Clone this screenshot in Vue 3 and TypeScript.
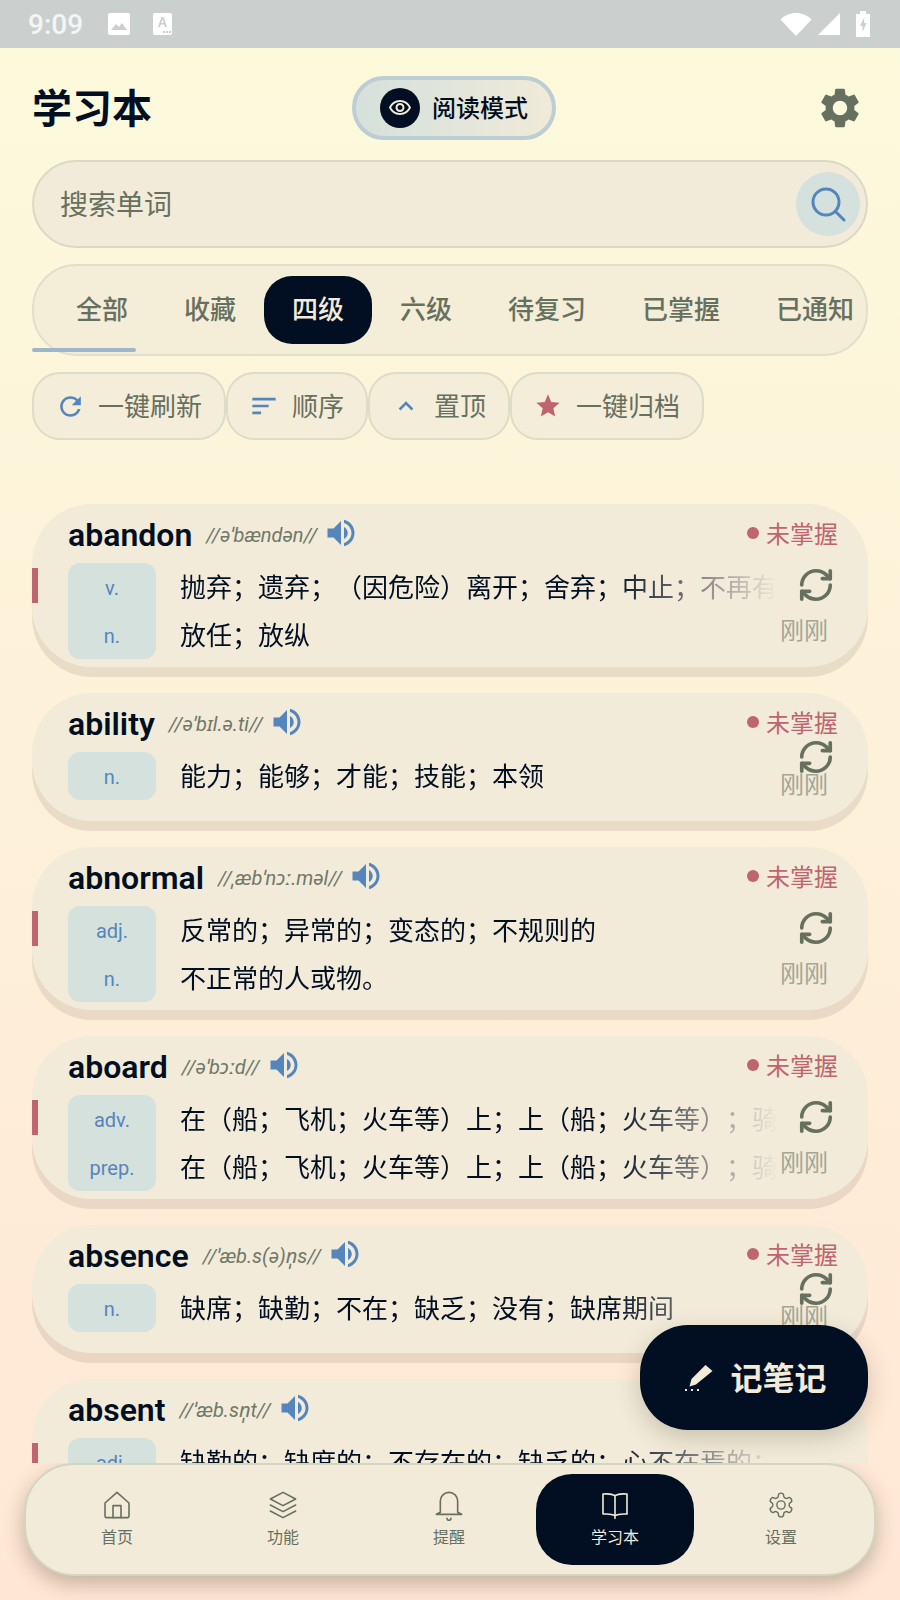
<script setup lang="ts">
interface Word {
  word: string
  phonetic: string
  defs: { pos: string; text: string }[]
}

const tabs = ['全部', '收藏', '四级', '六级', '待复习', '已掌握', '已通知']
const activeTab = '四级'

const words: Word[] = [
  {
    word: 'abandon',
    phonetic: '//əˈbændən//',
    defs: [
      { pos: 'v.', text: '抛弃；遗弃；（因危险）离开；舍弃；中止；不再有' },
      { pos: 'n.', text: '放任；放纵' },
    ],
  },
  {
    word: 'ability',
    phonetic: '//əˈbɪl.ə.ti//',
    defs: [{ pos: 'n.', text: '能力；能够；才能；技能；本领' }],
  },
  {
    word: 'abnormal',
    phonetic: '//ˌæbˈnɔː.məl//',
    defs: [
      { pos: 'adj.', text: '反常的；异常的；变态的；不规则的' },
      { pos: 'n.', text: '不正常的人或物。' },
    ],
  },
  {
    word: 'aboard',
    phonetic: '//əˈbɔːd//',
    defs: [
      { pos: 'adv.', text: '在（船；飞机；火车等）上；上（船；火车等）；骑' },
      { pos: 'prep.', text: '在（船；飞机；火车等）上；上（船；火车等）；骑' },
    ],
  },
  {
    word: 'absence',
    phonetic: '//ˈæb.s(ə)n̩s//',
    defs: [{ pos: 'n.', text: '缺席；缺勤；不在；缺乏；没有；缺席期间' }],
  },
  {
    word: 'absent',
    phonetic: '//ˈæb.sn̩t//',
    defs: [
      { pos: 'adj.', text: '缺勤的；缺席的；不存在的；缺乏的；心不在焉的；' },
      { pos: 'v.', text: '缺席；不参加' },
    ],
  },
]

const navItems = [
  { label: '首页', icon: 'home', box: '0 0 24 24' },
  { label: '功能', icon: 'layers', box: '0 0 24 24' },
  { label: '提醒', icon: 'bell', box: '0 0 24 24' },
  { label: '学习本', icon: 'book', box: '0 0 24 24' },
  { label: '设置', icon: 'gear', box: '-1.5 -1.5 27 27' },
]
</script>

<template>
  <div class="page">
    <div class="status">
      <span class="time">9:09</span>
      <svg class="st-img" viewBox="0 0 22 22">
        <rect width="22" height="22" rx="2" fill="#fff" />
        <path d="M3 17l5-6 3 3 3-4 5 7z" fill="#cbcfce" />
      </svg>
      <svg class="st-a" viewBox="0 0 19 22">
        <rect width="19" height="22" rx="2" fill="#fff" />
        <path d="M5 14 8.500 4h2L14 14h-2l-.8-2.400H7.800L7 14zM8.300 10h2.400L9.500 6.200z" fill="#cbcfce" />
        <path d="M10 18h2v2h-2zM13 18h2v2h-2zM16 18h2v2h-2z" fill="#cbcfce" />
      </svg>
      <span class="st-space"></span>
      <svg class="st-wifi" viewBox="0 0 32 24">
        <path d="M0.500 7.500C4.500 3.500 10 1 16 1s11.500 2.500 15.500 6.500L17 23a1.400 1.400 0 0 1-2 0z" fill="#fff" />
      </svg>
      <svg class="st-signal" viewBox="0 0 22 22">
        <path d="M0 22 22 0v22z" fill="#fff" />
      </svg>
      <svg class="st-batt" viewBox="0 0 14 26">
        <path d="M4 0h6v3h4v23H0V3h4z" fill="#fff" />
        <path d="M8.500 6 4 15h2.500v6L10.500 12H8z" fill="#cbcfce" />
      </svg>
    </div>

    <header class="head">
      <h1 class="title">学习本</h1>
      <div class="read-pill">
        <span class="eye">
          <svg viewBox="0 0 24 24" width="24" height="24">
            <path fill="#f2ebd9" d="M12 6c3.790 0 7.170 2.130 8.820 5.500C19.170 14.870 15.790 17 12 17s-7.170-2.130-8.820-5.500C4.830 8.130 8.210 6 12 6m0-2C7 4 2.730 7.110 1 11.500 2.730 15.890 7 19 12 19s9.270-3.110 11-7.500C21.270 7.110 17 4 12 4zm0 5c1.380 0 2.500 1.120 2.500 2.500S13.380 14 12 14s-2.500-1.120-2.500-2.500S10.620 9 12 9m0-2c-2.480 0-4.500 2.020-4.500 4.500S9.520 16 12 16s4.500-2.020 4.500-4.500S14.480 7 12 7z" />
          </svg>
        </span>
        <span class="lift">阅读模式</span>
      </div>
      <svg class="gear" viewBox="0 0 24 24" width="48" height="48">
        <path fill="#67705f" d="M19.140 12.940c.04-.3.06-.61.06-.94 0-.32-.02-.64-.07-.94l2.030-1.580c.18-.14.23-.41.12-.61l-1.920-3.320c-.12-.22-.37-.29-.59-.22l-2.390.96c-.5-.38-1.030-.7-1.620-.94l-.36-2.540c-.04-.24-.24-.41-.48-.41h-3.840c-.24 0-.43.17-.47.41l-.36 2.540c-.59.24-1.130.57-1.620.94l-2.390-.96c-.22-.08-.47 0-.59.22L2.740 8.870c-.12.21-.08.47.12.61l2.030 1.580c-.05.3-.09.63-.09.94s.02.64.07.94l-2.030 1.580c-.18.14-.23.41-.12.61l1.920 3.320c.12.22.37.29.59.22l2.390-.96c.5.38 1.030.7 1.620.94l.36 2.540c.05.24.24.41.48.41h3.840c.24 0 .44-.17.47-.41l.36-2.540c.59-.24 1.130-.56 1.620-.94l2.390.96c.22.08.47 0 .59-.22l1.920-3.320c.12-.22.07-.47-.12-.61l-2.010-1.580zM12 15.600c-1.980 0-3.600-1.620-3.600-3.600s1.620-3.600 3.600-3.600 3.600 1.620 3.600 3.600-1.620 3.600-3.600 3.600z" />
      </svg>
    </header>

    <div class="search">
      <span class="placeholder">搜索单词</span>
      <span class="search-btn">
        <svg viewBox="0 0 36 36" width="36" height="36" fill="none" stroke="#5585bd" stroke-width="3">
          <circle cx="16" cy="16" r="13" />
          <path d="M26 26l8 8" stroke-linecap="round" />
        </svg>
      </span>
    </div>

    <div class="tabs-wrap">
      <div class="tabs">
        <span v-for="t in tabs" :key="t" class="tab" :class="{ active: t === activeTab }">{{ t }}</span>
      </div>
      <span class="indicator"></span>
    </div>

    <div class="actions">
      <div class="action">
        <svg viewBox="0 0 24 24" width="31" height="31" class="refresh">
          <path fill="#5585bd" d="M17.650 6.350C16.200 4.900 14.210 4 12 4c-4.420 0-7.990 3.580-7.990 8s3.570 8 7.990 8c3.730 0 6.840-2.550 7.730-6h-2.080c-.82 2.330-3.040 4-5.650 4-3.310 0-6-2.690-6-6s2.690-6 6-6c1.660 0 3.140.69 4.220 1.780L13 11h7V4l-2.350 2.350z" />
        </svg>
        <span class="lift">一键刷新</span>
      </div>
      <div class="action">
        <svg viewBox="0 0 24 24" width="28" height="28">
          <path fill="#5585bd" d="M2 5h20v2.200H2zM2 10.900h14v2.200H2zM2 16.800h7.500V19H2z" />
        </svg>
        <span class="lift">顺序</span>
      </div>
      <div class="action">
        <svg viewBox="0 0 24 24" width="28" height="28">
          <path fill="none" stroke="#5585bd" stroke-width="2.200" d="M6.500 15 12 9.500 17.500 15" />
        </svg>
        <span class="lift">置顶</span>
      </div>
      <div class="action">
        <svg viewBox="0 0 24 24" width="28" height="28">
          <path fill="#bf6570" d="M12 17.270 18.180 21l-1.640-7.030L22 9.240l-7.190-.61L12 2 9.190 8.630 2 9.240l5.460 4.730L5.820 21z" />
        </svg>
        <span class="lift">一键归档</span>
      </div>
    </div>

    <main class="list">
      <article v-for="w in words" :key="w.word" class="card" :class="{ tall: w.defs.length > 1 }">
        <span v-if="w.defs.length > 1" class="mark"></span>
        <div class="card-head">
          <span class="word">{{ w.word }}</span>
          <span class="phonetic">{{ w.phonetic }}</span>
          <svg class="speaker" viewBox="0 0 24 24" width="36" height="36">
            <path fill="#5585bd" d="M3 9v6h4l5 5V4L7 9H3zm13.500 3c0-1.770-1.020-3.290-2.500-4.030v8.050c1.480-.73 2.500-2.250 2.500-4.020zM14 3.230v2.060c2.890.86 5 3.540 5 6.710s-2.110 5.850-5 6.710v2.060c4.010-.91 7-4.490 7-8.770s-2.990-7.860-7-8.770z" />
          </svg>
          <span class="state" v-if="w.word !== 'absent'"><i class="dot"></i>未掌握</span>
        </div>
        <div class="card-body">
          <div class="pos-col">
            <span v-for="d in w.defs" :key="d.pos" class="pos">{{ d.pos }}</span>
          </div>
          <div class="defs">
            <div v-for="d in w.defs" :key="d.pos" class="def">{{ d.text }}</div>
          </div>
        </div>
        <div class="sync" v-if="w.word !== 'absent'">
          <svg viewBox="0 0 24 24" width="38" height="38" fill="none" stroke="#67705f" stroke-width="2.300" stroke-linecap="round" stroke-linejoin="round">
            <path d="M3 12a9 9 0 0 1 9-9 9.750 9.750 0 0 1 6.740 2.740L21 8" />
            <path d="M21 3v5h-5" />
            <path d="M21 12a9 9 0 0 1-9 9 9.750 9.750 0 0 1-6.740-2.740L3 16" />
            <path d="M8 16H3v5" />
          </svg>
          <span class="ago">刚刚</span>
        </div>
      </article>
    </main>

    <div class="fab">
      <svg viewBox="0 0 36 36" width="36" height="36">
        <path fill="#f2ebd9" d="M24.500 5 31.500 11 15 24.500 8.500 26.500 10.500 19z" />
        <path fill="#f2ebd9" d="M4 29h2v2H4zM10 29h2v2h-2zM16 29h2v2h-2z" />
      </svg>
      <span class="lift">记笔记</span>
    </div>

    <nav class="nav">
      <div v-for="n in navItems" :key="n.label" class="nav-item" :class="{ on: n.label === '学习本' }">
        <svg :viewBox="n.box" width="32" height="32" fill="none" stroke="currentColor" stroke-width="1.200" stroke-linecap="round" stroke-linejoin="round">
          <template v-if="n.icon === 'home'">
            <path d="M3 10.500 12 2.500l9 8V20a1.500 1.500 0 0 1-1.500 1.500h-15A1.500 1.500 0 0 1 3 20z" />
            <path d="M9 21.500v-9h6v9" />
          </template>
          <template v-else-if="n.icon === 'layers'">
            <path d="M12 2.500 2.500 7.500l9.500 5 9.500-5z" />
            <path d="M2.500 12l9.500 5 9.500-5" />
            <path d="M2.500 16.500l9.500 5 9.500-5" />
          </template>
          <template v-else-if="n.icon === 'bell'">
            <path d="M5.500 17.500V9a6.500 6.500 0 0 1 13 0v8.500l3 1.500h-19z" />
            <path d="M10.500 22a1.500 1.500 0 0 0 3 0" />
          </template>
          <template v-else-if="n.icon === 'book'">
            <path d="M12 5c-2-1.300-5-1.600-9-1.200v15c4-.3 7 0 9 1.200 2-1.200 5-1.500 9-1.200v-15c-4-.4-7-.1-9 1.200z" />
            <path d="M12 5v17" />
          </template>
          <template v-else>
            <path d="M12.220 2h-.44a2 2 0 0 0-2 2v.18a2 2 0 0 1-1 1.730l-.43.25a2 2 0 0 1-2 0l-.15-.08a2 2 0 0 0-2.730.73l-.22.38a2 2 0 0 0 .73 2.730l.15.1a2 2 0 0 1 1 1.720v.51a2 2 0 0 1-1 1.740l-.15.09a2 2 0 0 0-.73 2.730l.22.38a2 2 0 0 0 2.730.73l.15-.08a2 2 0 0 1 2 0l.43.25a2 2 0 0 1 1 1.730V20a2 2 0 0 0 2 2h.44a2 2 0 0 0 2-2v-.18a2 2 0 0 1 1-1.730l.43-.25a2 2 0 0 1 2 0l.15.08a2 2 0 0 0 2.730-.73l.22-.39a2 2 0 0 0-.73-2.730l-.15-.08a2 2 0 0 1-1-1.740v-.5a2 2 0 0 1 1-1.740l.15-.09a2 2 0 0 0 .73-2.730l-.22-.38a2 2 0 0 0-2.730-.73l-.15.08a2 2 0 0 1-2 0l-.43-.25a2 2 0 0 1-1-1.730V4a2 2 0 0 0-2-2z" />
            <circle cx="12" cy="12" r="3.500" />
          </template>
        </svg>
        <span>{{ n.label }}</span>
      </div>
    </nav>
  </div>
</template>

<style>
html,
body {
  margin: 0;
  background: #ffe8d6;
}
</style>

<style scoped>
.page {
  position: relative;
  width: 900px;
  height: 1600px;
  display: flex;
  flex-direction: column;
  overflow: hidden;
  background: linear-gradient(180deg, #fcfadc 0%, #ffe7d6 100%);
  font-family: Roboto, "Noto Sans CJK SC", sans-serif;
  color: #020f22;
  text-spacing-trim: space-all;
}
.lift {
  margin-bottom: 4px;
}

.status {
  flex: none;
  height: 48px;
  display: flex;
  align-items: center;
  padding: 0 30px 0 28px;
  background: #cbcfce;
  box-sizing: border-box;
}
.time {
  font-size: 28px;
  font-weight: 500;
  color: #f4f6f5;
  width: 80px;
}
.st-img {
  width: 22px;
  height: 22px;
}
.st-a {
  width: 19px;
  height: 22px;
  margin-left: 23px;
}
.st-space {
  flex: 1;
}
.st-wifi {
  width: 32px;
  height: 24px;
}
.st-signal {
  width: 22px;
  height: 22px;
  margin-left: 6px;
}
.st-batt {
  width: 14px;
  height: 26px;
  margin-left: 16px;
}

.head {
  flex: none;
  margin-top: 28px;
  height: 64px;
  padding: 0 36px 0 32px;
  display: grid;
  grid-template-columns: 1fr auto 1fr;
  align-items: center;
}
.title {
  margin: 4px 0 0;
  font-size: 40px;
  font-weight: 600;
  line-height: 1;
}
.read-pill {
  box-sizing: border-box;
  width: 204px;
  height: 64px;
  margin-left: 12px;
  display: flex;
  align-items: center;
  gap: 12px;
  padding-left: 24px;
  border: 4px solid #bccdd3;
  border-radius: 32px;
  background: linear-gradient(90deg, #d5e1dc, #f0ead9);
  font-size: 24px;
  font-weight: 500;
}
.eye {
  width: 40px;
  height: 40px;
  border-radius: 50%;
  background: #020f22;
  display: flex;
  align-items: center;
  justify-content: center;
}
.gear {
  justify-self: end;
}

.search {
  flex: none;
  box-sizing: border-box;
  height: 88px;
  margin: 20px 32px 0;
  padding: 0 6px 0 26px;
  display: flex;
  align-items: center;
  justify-content: space-between;
  border: 2px solid #d9d9c5;
  border-radius: 44px;
  background: #f2ebd9;
}
.placeholder {
  font-size: 28px;
  color: #67705f;
  margin-bottom: 2px;
}
.search-btn {
  width: 64px;
  height: 64px;
  border-radius: 50%;
  background: #d5e1dc;
  display: flex;
  align-items: center;
  justify-content: center;
}

.tabs-wrap {
  flex: none;
  position: relative;
  margin: 16px 32px 0;
}
.tabs {
  box-sizing: border-box;
  height: 92px;
  padding: 0 0 0 14px;
  display: flex;
  align-items: center;
  overflow: hidden;
  border: 2px solid #dfdfcb;
  border-radius: 44px;
  background: #f4edd8;
}
.tab {
  flex: none;
  height: 68px;
  line-height: 68px;
  padding: 0 28px;
  border-radius: 28px;
  font-size: 26px;
  font-weight: 500;
  color: #67705f;
}
.tab.active {
  background: #020f22;
  color: #f2ebd9;
}
.indicator {
  position: absolute;
  left: 0;
  bottom: 4px;
  width: 104px;
  height: 4px;
  border-radius: 2px;
  background: #9db7c9;
}

.actions {
  flex: none;
  display: flex;
  margin: 16px 32px 0;
}
.action {
  box-sizing: border-box;
  height: 68px;
  display: flex;
  align-items: center;
  gap: 14px;
  padding: 0 22px;
  border: 2px solid #dcdcc8;
  border-radius: 28px;
  background: #f4edd9;
  font-size: 26px;
  color: #67705f;
}
.action .refresh {
  margin: 0 -1.500px;
}

.list {
  flex: 1;
  min-height: 0;
  margin-top: 64px;
  padding: 0 32px;
  display: flex;
  flex-direction: column;
  gap: 26px;
  overflow: hidden;
}
.card {
  flex: none;
  position: relative;
  box-sizing: border-box;
  min-height: 128px;
  padding: 0 30px 8px 36px;
  border-radius: 60px;
  background: #f2ebd9;
  box-shadow: 0 10px 0 rgba(110, 95, 90, 0.14);
}
.mark {
  position: absolute;
  left: 0;
  top: 64px;
  width: 6px;
  height: 35px;
  background: #bf6570;
}
.card-head {
  height: 59px;
  display: flex;
  align-items: center;
  padding-top: 2px;
  box-sizing: border-box;
}
.word {
  font-size: 32px;
  font-weight: 600;
  color: #020f22;
}
.phonetic {
  margin-left: 14px;
  font-family: Roboto, "Noto Sans", sans-serif;
  font-size: 20px;
  font-style: italic;
  color: #6f7868;
}
.speaker {
  margin-left: 6px;
  margin-top: -4px;
}
.state {
  margin-left: auto;
  margin-bottom: 4px;
  display: flex;
  align-items: center;
  gap: 7px;
  font-size: 24px;
  color: #bf6570;
}
.dot {
  width: 12px;
  height: 12px;
  border-radius: 50%;
  background: #bf6570;
}
.card-body {
  display: flex;
  gap: 24px;
}
.pos-col {
  flex: none;
  width: 88px;
  display: flex;
  flex-direction: column;
  border-radius: 12px;
  background: #d5e1dc;
}
.pos {
  height: 48px;
  line-height: 50px;
  text-align: center;
  font-size: 20px;
  color: #5585bd;
}
.defs {
  width: 598px;
  overflow: hidden;
  -webkit-mask-image: linear-gradient(90deg, #000 72%, transparent 100%);
  mask-image: linear-gradient(90deg, #000 72%, transparent 100%);
}
.def {
  height: 48px;
  line-height: 50px;
  font-size: 26px;
  white-space: nowrap;
  color: #020f22;
}
.sync {
  position: absolute;
  right: 33px;
  top: 45px;
  display: flex;
  flex-direction: column;
  align-items: flex-end;
}
.tall .sync {
  top: 62px;
}
.ago {
  margin-top: -3px;
  margin-right: 7px;
  font-size: 24px;
  line-height: 24px;
  color: #a3a697;
}
.tall .ago {
  margin-top: 15px;
}

.fab {
  position: absolute;
  right: 32px;
  bottom: 170px;
  box-sizing: border-box;
  width: 228px;
  height: 105px;
  display: flex;
  align-items: center;
  justify-content: center;
  gap: 13px;
  border-radius: 48px;
  background: #020f22;
  color: #f2ebd9;
  font-size: 32px;
  font-weight: 700;
  box-shadow: 0 8px 24px rgba(60, 50, 30, 0.22);
}

.nav {
  flex: none;
  box-sizing: border-box;
  height: 113px;
  margin: 0 24px 24px;
  padding: 9px 10px 9px 8px;
  display: flex;
  border: 2px solid #d2d6c0;
  border-radius: 50px;
  background: #f2ebd9;
  box-shadow: 0 8px 20px rgba(70, 60, 40, 0.32);
}
.nav-item {
  flex: 1;
  margin: 0 4px;
  padding-top: 15px;
  display: flex;
  flex-direction: column;
  align-items: center;
  gap: 6px;
  border-radius: 36px;
  font-size: 16px;
  line-height: 22px;
  color: #67705f;
}
.nav-item.on {
  background: #020f22;
  color: #f2ebd9;
}
</style>
